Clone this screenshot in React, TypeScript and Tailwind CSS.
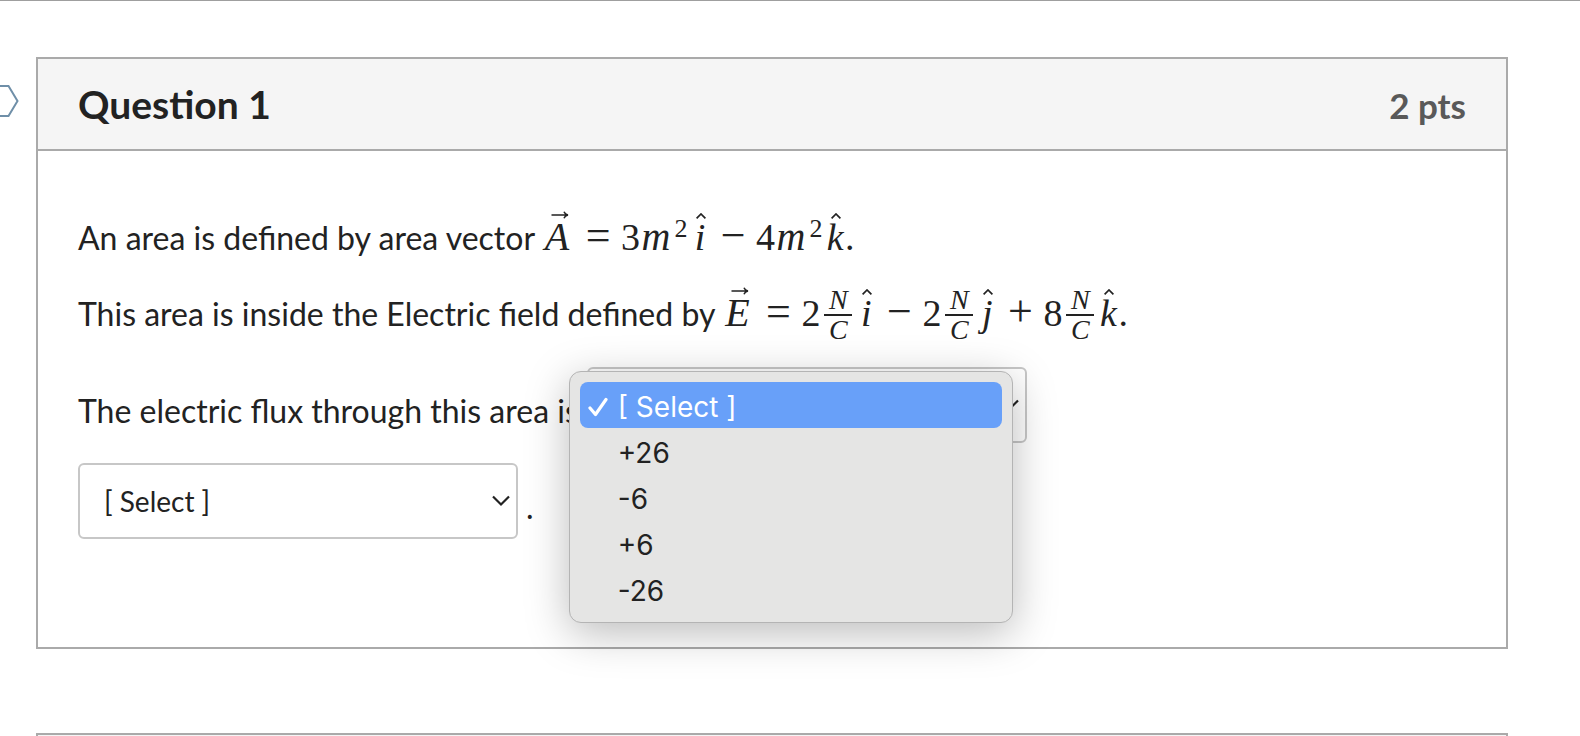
import React, { useState } from "react";

const OPTIONS = ["[ Select ]", "+26", "-6", "+6", "-26"];

type Children = { children: React.ReactNode };

function Arrow() {
  return (
    <svg className="absolute -top-0.5 left-3" width="18" height="8" viewBox="0 0 18 8" fill="none" stroke="#222" strokeWidth="1.5" aria-hidden="true">
      <path d="M0.5 4H16.5M13 0.8C13.6 2.6 14.9 3.6 17 4C14.9 4.4 13.6 5.4 13 7.2" />
    </svg>
  );
}

function Hat() {
  return (
    <svg className="absolute top-0 left-1.5" width="10" height="6" viewBox="0 0 10 6" fill="none" stroke="#222" strokeWidth="1.7" aria-hidden="true">
      <path d="M0.6 5.4L5 1L9.4 5.4" />
    </svg>
  );
}

function Vec({ children }: Children) {
  return (
    <span className="relative inline-block w-9 text-center text-[40px] italic">
      {children}
      <Arrow />
    </span>
  );
}

function Unit({ children }: Children) {
  return (
    <span className="relative inline-block w-5 text-center italic">
      {children}
      <Hat />
    </span>
  );
}

function Op({ children }: Children) {
  return <span className="inline-block w-[46px] text-center text-[44px] leading-none">{children}</span>;
}

function Metres() {
  return (
    <span className="flex items-baseline">
      <span className="w-8 text-center text-[40px] italic">m</span>
      <sup className="w-[18px] text-center text-[26px] leading-none">2</sup>
    </span>
  );
}

function NewtonPerCoulomb() {
  return (
    <span className="mx-1 flex w-7 flex-col self-center pt-1 text-center text-[28px] italic">
      <span className="border-b-2 border-[#222] leading-7">N</span>
      <span className="leading-7">C</span>
    </span>
  );
}

function MathText({ children }: Children) {
  return (
    <span className="flex h-12 items-baseline font-['Liberation_Serif',serif] text-[38px] leading-12">
      {children}
    </span>
  );
}

function AnswerSelect({ label, value, onChange }: { label: string; value: string; onChange: (v: string) => void }) {
  return (
    <span className="relative block">
      <select
        aria-label={label}
        value={value}
        onChange={(e) => onChange(e.target.value)}
        className="block h-19 w-110 appearance-none rounded-md border-2 border-[#c7c7c7] bg-white pr-12 pl-6 text-[28px]"
      >
        {OPTIONS.map((o) => (
          <option key={o}>{o}</option>
        ))}
      </select>
      <svg className="pointer-events-none absolute top-8 right-2" width="18" height="12" viewBox="0 0 18 12" fill="none" stroke="#222" strokeWidth="2.2" aria-hidden="true">
        <path d="M1 1.5L9 9.5L17 1.5" />
      </svg>
    </span>
  );
}

export default function App() {
  const [flux, setFlux] = useState(OPTIONS[0]);
  const [unit, setUnit] = useState(OPTIONS[0]);

  return (
    <main className="h-screen overflow-hidden border-t border-[#9f9f9f] bg-white pt-14 pr-18 font-[Lato,sans-serif] text-[32px] leading-12 text-[#222]">
      <div className="flex">
        <div className="w-9 shrink-0 pt-7">
          <svg width="19" height="32" viewBox="0 0 19 32" fill="none" stroke="#6f8fa8" strokeWidth="2" aria-hidden="true">
            <path d="M-2 1H8.5L17.5 16L8.5 31H-2" />
          </svg>
        </div>
        <section className="flex-1 border-2 border-[#aaa]">
          <header className="flex h-23 items-center justify-between border-b-2 border-[#aaa] bg-[#f5f5f5] px-10">
            <h2 className="text-[39px] font-bold">Question 1</h2>
            <span className="pt-0.5 text-[35px] font-bold text-[#595959]">2 pts</span>
          </header>
          <div className="px-10 pt-[62px] pb-[108px]">
            <div className="flex h-12 items-baseline gap-1 whitespace-nowrap">
              An area is defined by area vector
              <MathText>
                <Vec>A</Vec>
                <Op>=</Op>3<Metres />
                <Unit>i</Unit>
                <Op>−</Op>4<Metres />
                <Unit>k</Unit>.
              </MathText>
            </div>
            <div className="mt-7 flex h-12 items-baseline gap-1 whitespace-nowrap">
              This area is inside the Electric field defined by
              <MathText>
                <Vec>E</Vec>
                <Op>=</Op>2<NewtonPerCoulomb />
                <Unit>i</Unit>
                <Op>−</Op>2<NewtonPerCoulomb />
                <Unit>j</Unit>
                <Op>+</Op>8<NewtonPerCoulomb />
                <Unit>k</Unit>.
              </MathText>
            </div>
            <div className="mt-[30px] flex items-center gap-2 whitespace-nowrap">
              <span className="pt-3">The electric flux through this area is</span>
              <div className="relative">
                <AnswerSelect label="Electric flux" value={flux} onChange={setFlux} />
                <div
                  role="listbox"
                  aria-label="Electric flux"
                  className="absolute top-1 -left-[18px] w-[444px] rounded-xl border border-[#b4b4b4] bg-[#e5e5e4] p-2.5 font-[Inter,sans-serif] text-[28px] shadow-[0_10px_44px_rgba(0,0,0,0.27)]"
                >
                  {OPTIONS.map((o) => (
                    <button
                      key={o}
                      type="button"
                      role="option"
                      aria-selected={o === flux}
                      onClick={() => setFlux(o)}
                      className="flex h-[46px] w-full items-center rounded-lg pt-1 pl-2 text-left aria-selected:bg-[#68a0f9] aria-selected:text-white"
                    >
                      <span className="w-[30px]">
                        {o === flux && (
                          <svg width="20" height="20" viewBox="0 0 20 20" fill="none" stroke="currentColor" strokeWidth="3.2" strokeLinecap="round" strokeLinejoin="round" aria-hidden="true">
                            <path d="M2 11L7.5 17.5L18 2.5" />
                          </svg>
                        )}
                      </span>
                      {o}
                    </button>
                  ))}
                </div>
              </div>
            </div>
            <div className="mt-5 flex items-center gap-2">
              <AnswerSelect label="Unit" value={unit} onChange={setUnit} />
              <span className="pt-3">.</span>
            </div>
          </div>
        </section>
      </div>
      <section className="mt-21 ml-9 h-24 border-2 border-[#aaa] bg-[#f5f5f5]" />
    </main>
  );
}
